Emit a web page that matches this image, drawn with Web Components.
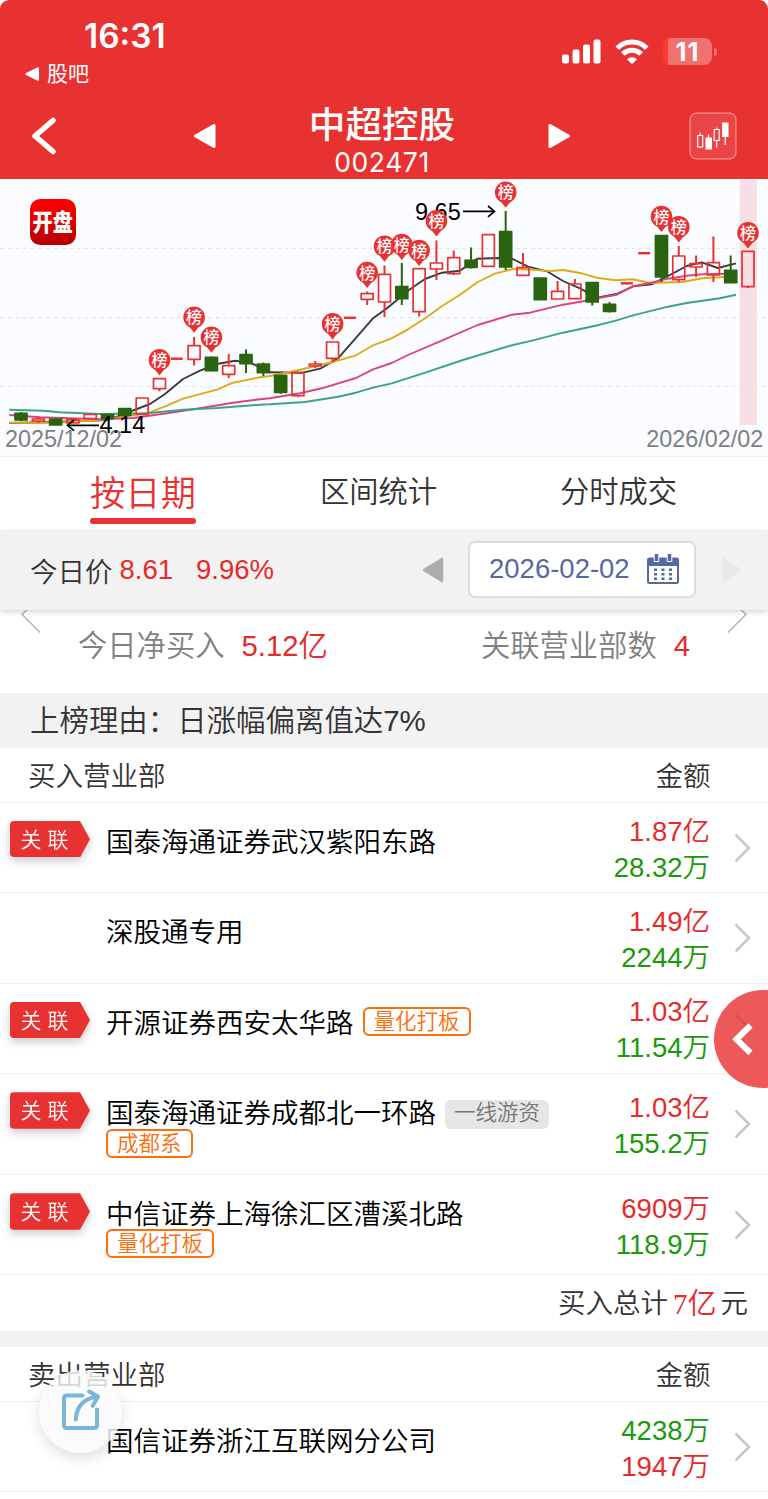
<!DOCTYPE html>
<html lang="zh-CN">
<head>
<meta charset="utf-8">
<meta name="viewport" content="width=device-width, initial-scale=1">
<title>中超控股 002471</title>
<style>
    body {
        margin: 0;
        background: #fff;
        font-family: "Liberation Sans", "Noto Sans CJK SC", sans-serif;
        font-weight: 350;
    }
</style>
</head>
<body>

<stock-page>
    <app-header slot="header" time="16:31" back="股吧" battery="11" code="002471">中超控股</app-header>
    <k-chart slot="header" from="2025/12/02" to="2026/02/02"></k-chart>
    <tab-bar slot="header">
        <tab-item active>按日期</tab-item>
        <tab-item>区间统计</tab-item>
        <tab-item>分时成交</tab-item>
    </tab-bar>
    <price-bar slot="header" price="8.61" change="9.96%" date="2026-02-02">今日价</price-bar>
    <net-summary slot="header">
        <summary-item value="5.12亿">今日净买入</summary-item>
        <summary-item value="4">关联营业部数</summary-item>
    </net-summary>

    <reason-bar>上榜理由：日涨幅偏离值达7%</reason-bar>
    <seat-section label="买入营业部" amount="金额">
        <seat-row linked buy="1.87亿" sell="28.32万">国泰海通证券武汉紫阳东路</seat-row>
        <seat-row buy="1.49亿" sell="2244万">深股通专用</seat-row>
        <seat-row linked buy="1.03亿" sell="11.54万">开源证券西安太华路<seat-tag slot="tags">量化打板</seat-tag></seat-row>
        <seat-row linked buy="1.03亿" sell="155.2万">国泰海通证券成都北一环路<seat-tag slot="tags" plain>一线游资</seat-tag><seat-tag slot="tags">成都系</seat-tag></seat-row>
        <seat-row linked buy="6909万" sell="118.9万">中信证券上海徐汇区漕溪北路<seat-tag slot="tags">量化打板</seat-tag></seat-row>
        <total-row slot="total" value="7亿" unit="元">买入总计</total-row>
    </seat-section>
    <seat-section label="卖出营业部" amount="金额">
        <seat-row flip buy="4238万" sell="1947万">国信证券浙江互联网分公司</seat-row>
    </seat-section>

    <drawer-button slot="float"></drawer-button>
    <share-button slot="float"></share-button>
</stock-page>

<script>
// clone a template string into an open shadow root
function render(el, html) {
    const template = document.createElement("template");
    template.innerHTML = html;
    el.attachShadow({mode: 'open'});
    el.shadowRoot.appendChild(template.content.cloneNode(true));
}

class StockPage extends HTMLElement {
    constructor() {
        super();
        render(this, `<style>
            :host {
                display: block;
                position: relative;
                height: 1499px;
                overflow: hidden;
                background: #fff;
            }
        </style>
        <slot name="header"></slot>
        <slot></slot>
        <slot name="float"></slot>`);
    }
}

class AppHeader extends HTMLElement {
    constructor() {
        super();
        render(this, `<style>
            :host {
                display: block;
                box-sizing: border-box;
                height: 179px;
                background: #e83231;
                border-radius: 9px 9px 0 0;
                color: #fff;
            }
            .status {
                display: flex;
                justify-content: space-between;
                height: 62px;
            }
            .time {
                font: 600 33.5px/40px Inter, sans-serif;
                padding: 16px 0 0 84px;
            }
            .icons {
                display: flex;
                align-items: center;
                padding: 38px 51px 0 0;
                height: 27px;
            }
            .battery {
                display: flex;
                align-items: center;
            }
            .cell {
                width: 49px;
                height: 27px;
                border-radius: 8px;
                background: linear-gradient(90deg, #ff3b30 5.5px, #f17171 5.5px);
                font: 700 25.5px/28px Inter, sans-serif;
                letter-spacing: 1px;
                text-align: center;
            }
            .nub {
                width: 3px;
                height: 8px;
                margin-left: 2px;
                border-radius: 0 4px 4px 0;
                background: #f17171;
            }
            .back {
                display: flex;
                align-items: center;
                gap: 8px;
                height: 24px;
                padding-left: 25px;
                font-size: 21px;
                font-weight: 400;
                line-height: 24px;
            }
            .nav {
                display: grid;
                grid-template-columns: 193px 23px 1fr 23px 118px 48px 31px;
                align-items: center;
                height: 93px;
            }
            .nav svg { display: block; margin-top: 6px; }
            .nav .chevron { margin-left: 31px; }
            .title {
                text-align: center;
                padding-top: 17px;
            }
            h1 {
                margin: 0;
                font-size: 36.6px;
                font-weight: 500;
                line-height: 42px;
            }
            .code {
                font: 400 26.5px/30px Inter, sans-serif;
                letter-spacing: .6px;
            }
        </style>
        <div class="status">
            <div class="time"></div>
            <div class="icons">
                <svg width="39" height="25" viewBox="0 0 39 25" fill="#fff">
                    <rect x="0" y="15.500" width="7" height="9" rx="2"/>
                    <rect x="10.500" y="10.500" width="7" height="14" rx="2"/>
                    <rect x="21" y="5.500" width="7" height="19" rx="2"/>
                    <rect x="31.500" y="0.500" width="7" height="24" rx="2"/>
                </svg>
                <svg style="margin:0 14px" width="34" height="26" viewBox="0 0 34 26">
                    <g fill="none" stroke="#fff" stroke-width="5">
                        <path d="M2.200 9.200A21 21 0 0 1 31.800 9.200"/>
                        <path d="M7.800 15A13 13 0 0 1 26.200 15"/>
                    </g>
                    <path d="M17 25.300l-5-5a7.300 7.300 0 0 1 10 0z" fill="#fff"/>
                </svg>
                <div class="battery"><div class="cell"></div><div class="nub"></div></div>
            </div>
        </div>
        <div class="back">
            <svg width="14" height="14" viewBox="0 0 14 14"><path d="M1.500 7L13 1.200V12.800z" fill="#fff" stroke="#fff" stroke-width="2" stroke-linejoin="round"/></svg>
            <span></span>
        </div>
        <div class="nav">
            <svg class="chevron" width="26" height="38" viewBox="0 0 26 38"><path d="M22 3.500L4 19L22 34.500" fill="none" stroke="#fff" stroke-width="5.500" stroke-linecap="round" stroke-linejoin="round"/></svg>
            <svg width="23" height="26" viewBox="0 0 23 26"><path d="M2.500 13L21 2.500V23.500z" fill="#fff" stroke="#fff" stroke-width="3" stroke-linejoin="round"/></svg>
            <div class="title"><h1><slot></slot></h1><div class="code"></div></div>
            <svg width="23" height="26" viewBox="0 0 23 26"><path d="M20.500 13L2 2.500V23.500z" fill="#fff" stroke="#fff" stroke-width="3" stroke-linejoin="round"/></svg>
            <span></span>
            <svg width="48" height="48" viewBox="0 0 48 48">
                <rect x="1" y="1" width="46" height="46" rx="6.500" fill="#fff" fill-opacity=".1" stroke="#fff" stroke-opacity=".5"/>
                <g fill="none" stroke="#fff" stroke-width="1.200">
                    <path d="M8.700 23.500h5v11.500h-5zM11.200 20.500v3M11.200 35v1M19.500 22.500v4M25.200 17.500h5v11h-5zM27.700 15.500v2M27.700 28.500v7M36.200 25v8"/>
                </g>
                <path d="M16.500 25.500h6.500v12h-6.500zM33 10.500h6.500v14.500h-6.500z" fill="#fff"/>
            </svg>
        </div>`);
        const root = this.shadowRoot;
        root.querySelector(".time").textContent = this.getAttribute("time");
        root.querySelector(".cell").textContent = this.getAttribute("battery");
        root.querySelector(".back span").textContent = this.getAttribute("back");
        root.querySelector(".code").textContent = this.getAttribute("code");
    }
}

// [colour, high, body top, body bottom, low], "-" is a flat day
const candles = [
    ["g", 232, 233.3, 240, 241], ["r", 237, 239, 241, 243], ["g", 239, 239, 245, 245],
    ["r", 239, 239.3, 243, 243], ["r", 234, 234.5, 238.5, 239], ["g", 234.5, 234.5, 238.5, 238.5],
    ["g", 228.7, 228.7, 235.3, 235.3], ["r", 218, 218, 234.3, 234.3], ["r", 198.7, 198.7, 208.7, 211.3],
    ["-", 178.7], ["r", 157, 165.7, 179.3, 185.5], ["g", 176.5, 177.3, 190.7, 191.3],
    ["r", 174, 185.7, 194.3, 198], ["g", 169.5, 174.7, 183.7, 193], ["g", 182.5, 184, 192.7, 196],
    ["g", 195.3, 195.3, 212.3, 213.8], ["r", 192.7, 192.7, 215.7, 217], ["r", 181, 184, 186, 188],
    ["r", 162, 162, 178.3, 182], ["-", 137.8], ["r", 111.5, 113.7, 119.3, 125],
    ["r", 85.5, 94.3, 122, 137], ["g", 83, 106.7, 118.7, 125], ["r", 88.7, 88.7, 131.7, 136.5],
    ["r", 60.5, 83, 89, 100], ["r", 70.5, 77.7, 93.7, 95], ["g", 67.5, 80.3, 87.3, 88.5],
    ["r", 54.7, 54.7, 86.3, 86.3], ["g", 31, 51.7, 87, 90], ["r", 73, 87.7, 95.3, 95.3],
    ["g", 98, 98, 119.7, 119.7], ["r", 101, 111.3, 119, 119], ["r", 99, 104, 118.7, 118.7],
    ["g", 102.7, 102.7, 122, 125.5], ["g", 122, 124.3, 131.3, 132.5], ["-", 103.3], ["-", 73.2],
    ["g", 55.7, 55.7, 97, 102], ["r", 66, 76, 99.7, 102], ["r", 75.5, 83.7, 87, 97],
    ["r", 56.5, 82.7, 95, 102], ["g", 75.5, 90.3, 102.7, 102.7], ["r", 71.3, 71.3, 106.7, 108]
];

// candle index -> centre of the pin
const pins = [[8, 179.3], [10, 136.7], [11, 156.7], [18, 143.3], [20, 92], [21, 65.7], [22, 64],
    [23, 70], [24, 40.3], [28, 11.7], [37, 36], [38, 46.3], [42, 52.3]];

const averages = {
    "#3a3b40": "9.3,243 55,242 107,240 125,234 133,230.5 150,224 165,214 183,199 200,190.7 217,184 235,180.7 242,181.7 251.7,183.3 270,192.3 303,192.7 321,188.3 338,178.3 373,138.3 387,128.3 410,109.3 425,99 442,92.7 460,90.7 477,78.7 498,78 512.7,79 528,86.7 547,91.3 563,101 580,108.3 597,117.7 616.7,114 633,106.3 651.7,104.3 668,96 686.7,86 701.7,82.3 718,88 736,83.3",
    "#dcab16": "9.3,242.7 57,242.7 100,240 133,235.3 150,232.3 167,225.7 183,218.7 217,209.7 233,202.7 260,197.3 270,196 300,189.7 331.7,182.3 356,175.3 373,165.3 391,158.7 408,149.3 426.7,137.3 441.7,126.3 460,114.7 477.7,102 495,93.7 512.7,89 533,89.7 550,91 563,90 581.7,93.3 596.7,97.7 615,100.3 633,99.3 650,103 683,102 701.7,98.3 720,97.3 736,96",
    "#d9457f": "9.3,235 40,237.3 100,239.3 133,238 167,233.3 200,228.3 233,222.7 260,219.3 270,218.3 300,213.3 321.7,208.3 356,198 373,189.3 391.7,183 408,175 441.7,160.7 477.7,145 511.7,134.7 530,132.7 563,124.7 583,121.3 600,117.7 616.7,114.7 633,106.3 650,103 668,98.7 686.7,95.7 703,94.3 730,93.7",
    "#3fa284": "9.3,229.7 43,230.7 60,232.3 100,234 147,233.3 183,229.7 217,228 260,224.7 270,224.3 305,222 338,216.7 356,212.7 373,207.7 391.7,203.3 423,193.3 463,180 511,165.5 533,160.3 563,152.7 600,144.7 616.7,140.3 633,135.3 668,126.7 686.7,123 720,118.3 736,114.7"
};

class KChart extends HTMLElement {
    constructor() {
        super();
        const x = i => 21 + 17.31 * i;
        let lines = "", bars = "", marks = "";
        for (const color in averages) {
            lines += `<polyline points="${averages[color]}" stroke="${color}"/>`;
        }
        candles.forEach(([kind, high, top, bottom, low], i) => {
            if (kind == "-") {
                bars += `<path d="M${x(i) - 6} ${high}h12" stroke="#e83231" stroke-width="2.500"/>`;
                return;
            }
            const color = kind == "g" ? "#2b6410" : "#e83231";
            bars += `<g stroke="${color}" fill="${kind == "g" ? color : "none"}" stroke-width="2" stroke-linejoin="round">
                <path d="M${x(i)} ${high}V${top}M${x(i)} ${bottom}V${low}"/>
                <rect x="${x(i) - 6}" y="${top}" width="12" height="${bottom - top}" stroke-width="1.700"/></g>`;
        });
        for (const [i, y] of pins) {
            marks += `<g transform="translate(${x(i)} ${y + .6})">
                <path d="M-5.500 8.500L0 15.500L5.500 8.500z" fill="#e83231"/><circle r="10.800" fill="#e83231"/>
                <text y="5.900" font-size="16" font-weight="500" text-anchor="middle" fill="#fff">榜</text></g>`;
        }
        render(this, `<style>
            :host {
                display: block;
                height: 278px;
                padding-top: 1px;
                box-sizing: border-box;
                background: #fbfcff;
                border-bottom: 1px solid #ecedf1;
            }
            svg { display: block; font-family: "Liberation Sans", "Noto Sans CJK SC", sans-serif; }
        </style>
        <svg width="768" height="275" viewBox="0 0 768 275">
            <defs>
                <linearGradient id="logo" x2="0" y2="1"><stop stop-color="#fd0000"/><stop offset=".4" stop-color="#e80002"/><stop offset="1" stop-color="#b40003"/></linearGradient>
            </defs>
            <path d="M0 68.500H768M0 137.700H768M0 206.500H768" stroke="#e2e4e9" stroke-width="1.200" stroke-dasharray="3.800 3.900"/>
            <rect x="739.700" y="0" width="17.200" height="245" fill="#f7dfe4"/>
            <rect x="30" y="19" width="46" height="46" rx="10" fill="url(#logo)"/>
            <text transform="translate(52.700 51) scale(.84 1)" font-size="24" font-weight="900" text-anchor="middle" fill="#fff">开盘</text>
            <g fill="none" stroke-width="1.900" stroke-linejoin="round">${lines}</g>
            ${bars}
            <g font-size="23.400" fill="#808080">
                <text class="from" x="5" y="267.300"></text>
                <text class="to" x="646.300" y="267.300"></text>
            </g>
            <g font-size="23.500" fill="#000">
                <text x="99.500" y="253">4.14</text>
                <text x="415" y="39.500">9.65</text>
            </g>
            <g fill="none" stroke="#000" stroke-width="1.700">
                <path d="M99 245.300H68M463 31.400H494"/>
                <path d="M74 240L67.500 245.300L74 250.600M488 26L494.500 31.400L488 36.800"/>
            </g>
            ${marks}
        </svg>`);
        this.shadowRoot.querySelector(".from").textContent = this.getAttribute("from");
        this.shadowRoot.querySelector(".to").textContent = this.getAttribute("to");
    }
}

class TabBar extends HTMLElement {
    constructor() {
        super();
        render(this, `<style>
            :host {
                display: grid;
                grid-template-columns: 286px 185px 1fr;
                height: 73px;
                padding-right: 2px;
            }
        </style><slot></slot>`);
    }
}

class TabItem extends HTMLElement {
    constructor() {
        super();
        render(this, `<style>
            :host {
                display: flex;
                justify-content: center;
                color: #333;
                font-size: 29.3px;
                line-height: 70px;
            }
            :host([active]) {
                color: #e83231;
                font-size: 35.3px;
                line-height: 74px;
            }
            span { height: 61px; }
            :host([active]) span::after {
                content: "";
                display: block;
                height: 6px;
                margin-top: -13px;
                border-radius: 3px;
                background: #e83231;
            }
        </style><span><slot></slot></span>`);
    }
}

class PriceBar extends HTMLElement {
    constructor() {
        super();
        render(this, `<style>
            :host {
                display: flex;
                align-items: center;
                position: relative;
                z-index: 1;
                height: 79.500px;
                padding: 0 25px 0 30px;
                box-sizing: border-box;
                background: #f2f2f2;
                box-shadow: 0 2px 5px rgba(0, 0, 0, .16);
                font-size: 27.5px;
                color: #333;
            }
            .num { color: #e62a2c; margin-left: 7px; }
            .num + .num { margin-left: 23px; }
            .prev { margin-left: auto; }
            .date {
                display: flex;
                align-items: center;
                justify-content: space-between;
                box-sizing: border-box;
                width: 228px;
                height: 57px;
                margin: 0 25px 0 24px;
                padding: 0 15px 2px 19px;
                border: 2px solid #dcdcdc;
                border-radius: 7px;
                background: #fff;
                color: #5669a2;
            }
        </style>
        <slot></slot><span class="num price"></span><span class="num change"></span>
        <svg class="prev" width="22" height="28" viewBox="0 0 22 28"><path d="M2 14L20 3V25z" fill="#acacac" stroke="#acacac" stroke-width="2.500" stroke-linejoin="round"/></svg>
        <div class="date">
            <span></span>
            <svg width="32" height="30" viewBox="0 0 32 30">
                <rect x="1" y="4.500" width="30" height="24.500" rx="1.500" fill="#fff" stroke="#5669a2" stroke-width="2"/>
                <path d="M1 4.500h30v7.500H1z" fill="#5669a2"/>
                <path d="M7.200 -1h4.600v8.500H7.200zM20.200 -1h4.600v8.500h-4.600z" fill="#5669a2" stroke="#fff" stroke-width="1"/>
                <g stroke="#5669a2" stroke-width="3" stroke-dasharray="2.500 2">
                    <path d="M8.500 14.500v12M16 14.500v12M23.500 14.500v12"/>
                </g>
            </svg>
        </div>
        <svg width="22" height="28" viewBox="0 0 22 28"><path d="M20 14L2 3V25z" fill="#e9e9e9" stroke="#e9e9e9" stroke-width="2.500" stroke-linejoin="round"/></svg>`);
        this.shadowRoot.querySelector(".price").textContent = this.getAttribute("price");
        this.shadowRoot.querySelector(".change").textContent = this.getAttribute("change");
        this.shadowRoot.querySelector(".date span").textContent = this.getAttribute("date");
    }
}

class NetSummary extends HTMLElement {
    constructor() {
        super();
        render(this, `<style>
            :host {
                display: flex;
                justify-content: space-between;
                height: 83.500px;
                padding: 0 21px;
            }
            svg { flex: none; margin-top: -8px; }
            .items {
                flex: 1;
                display: flex;
                justify-content: space-between;
                padding: 0 37px 0 37px;
            }
        </style>
        <svg width="20" height="32" viewBox="0 0 20 32"><path d="M14 0L1 12.500L19 30.500" fill="none" stroke="#adadad" stroke-width="1.200"/></svg>
        <div class="items"><slot></slot></div>
        <svg width="20" height="32" viewBox="0 0 20 32"><path d="M6 0L19 12.500L1 30.500" fill="none" stroke="#adadad" stroke-width="1.200"/></svg>`);
    }
}

class SummaryItem extends HTMLElement {
    constructor() {
        super();
        render(this, `<style>
            :host {
                display: flex;
                gap: 17px;
                color: #808080;
                font-size: 29.3px;
                line-height: 72px;
            }
            b { color: #e62a2c; font-weight: inherit; }
        </style><span><slot></slot></span><b></b>`);
        this.shadowRoot.querySelector("b").textContent = this.getAttribute("value");
    }
}

class ReasonBar extends HTMLElement {
    constructor() {
        super();
        render(this, `<style>
            :host {
                display: block;
                height: 54.700px;
                padding-left: 30px;
                background: #f2f2f2;
                color: #333;
                font-size: 29.45px;
                line-height: 56px;
            }
        </style><slot></slot>`);
    }
}

class SeatSection extends HTMLElement {
    constructor() {
        super();
        render(this, `<style>
            :host { display: block; color: #333; }
            :host(:not(:first-of-type)) { border-top: 16px solid #f2f2f2; }
            .head {
                display: flex;
                justify-content: space-between;
                box-sizing: border-box;
                height: 55.300px;
                padding: 0 57.500px 0 28px;
                border-bottom: 1.500px solid #ededed;
                font-size: 27.5px;
                line-height: 57px;
            }
        </style>
        <div class="head"><span class="label"></span><span class="amount"></span></div>
        <slot></slot>
        <slot name="total"></slot>`);
        this.shadowRoot.querySelector(".label").textContent = this.getAttribute("label");
        this.shadowRoot.querySelector(".amount").textContent = this.getAttribute("amount");
    }
}

class SeatRow extends HTMLElement {
    constructor() {
        super();
        render(this, `<style>
            :host {
                display: grid;
                grid-template-columns: 96px 450px 1fr 41px;
                box-sizing: border-box;
                min-height: 90.400px;
                padding-left: 10px;
                border-bottom: 1px solid #ededed;
                font-size: 27.5px;
            }
            .badge {
                height: 36.500px;
                margin-top: 18px;
                filter: drop-shadow(0 4px 4px rgba(0, 0, 0, .2));
            }
            .badge span {
                display: block;
                box-sizing: border-box;
                width: 80px;
                height: 36.500px;
                padding-left: 10.500px;
                border-radius: 4px;
                clip-path: polygon(0 0, 70px 0, 100% 50%, 70px 100%, 0 100%);
                background: #e83231;
                color: #fff;
                font-size: 21px;
                letter-spacing: 6px;
                line-height: 37px;
                white-space: nowrap;
            }
            :host(:not([linked])) .badge { visibility: hidden; }
            .name {
                display: flex;
                flex-wrap: wrap;
                align-content: flex-start;
                column-gap: 9px;
                padding: 24px 0 16px;
                color: #000;
                line-height: 31px;
            }
            .amounts {
                align-self: center;
                text-align: right;
                line-height: 36px;
                padding-top: 4px;
                margin-right: 17px;
            }
            .amounts div { color: #e62a2c; }
            .amounts div + div { color: #1a9a0a; }
            :host([flip]) .amounts div { color: #1a9a0a; }
            :host([flip]) .amounts div + div { color: #e62a2c; }
            svg { align-self: center; margin-left: 7px; }
        </style>
        <div class="badge"><span></span></div>
        <div class="name"><span><slot></slot></span><slot name="tags"></slot></div>
        <div class="amounts"><div class="buy"></div><div class="sell"></div></div>
        <svg width="18" height="30" viewBox="0 0 18 30"><path d="M1.500 1.500L15 15L1.500 28.500" fill="none" stroke="#c7c7c7" stroke-width="2.500"/></svg>`);
        if (this.hasAttribute("linked")) {
            this.shadowRoot.querySelector(".badge span").textContent = "关联";
        }
        this.shadowRoot.querySelector(".buy").textContent = this.getAttribute("buy");
        this.shadowRoot.querySelector(".sell").textContent = this.getAttribute("sell");
    }
}

class SeatTag extends HTMLElement {
    constructor() {
        super();
        render(this, `<style>
            :host {
                display: block;
                box-sizing: border-box;
                height: 29px;
                margin-top: -1px;
                padding: 0 9px;
                border: 2px solid #fb6d0d;
                border-radius: 6px;
                color: #fb6d0d;
                font-size: 21.5px;
                line-height: 26px;
            }
            :host([plain]) {
                margin: 2px 0 1px;
                border: 0;
                background: #e6e6e6;
                color: #777;
            }
        </style><slot></slot>`);
    }
}

class TotalRow extends HTMLElement {
    constructor() {
        super();
        render(this, `<style>
            :host {
                display: flex;
                justify-content: flex-end;
                height: 55.600px;
                padding-right: 20px;
                color: #333;
                font-size: 27.5px;
                line-height: 58px;
            }
            b {
                margin: 0 4px 0 5px;
                color: #e62a2c;
                font: 350 29px/58px "Liberation Serif", "Noto Sans CJK SC", serif;
            }
        </style><span><slot></slot></span><b></b><span class="unit"></span>`);
        this.shadowRoot.querySelector("b").textContent = this.getAttribute("value");
        this.shadowRoot.querySelector(".unit").textContent = this.getAttribute("unit");
    }
}

class DrawerButton extends HTMLElement {
    constructor() {
        super();
        render(this, `<style>
            :host {
                position: absolute;
                top: 990px;
                right: -44px;
                z-index: 2;
                width: 98px;
                height: 98px;
                border-radius: 50%;
                background: rgba(232, 47, 49, .8);
            }
        </style>
        <svg width="98" height="98" viewBox="0 0 98 98"><path d="M36.500 35.500L22.500 49.300L36.500 63" fill="none" stroke="#fff" stroke-width="6"/></svg>`);
    }
}

class ShareButton extends HTMLElement {
    constructor() {
        super();
        render(this, `<style>
            :host {
                position: absolute;
                left: 38.500px;
                top: 1370px;
                z-index: 2;
                width: 83px;
                height: 83px;
                border-radius: 50%;
                background: rgba(250, 250, 250, .82);
                box-shadow: 0 5px 14px rgba(0, 0, 0, .13);
            }
        </style>
        <svg width="83" height="83" viewBox="0 0 83 83" fill="none" stroke="#79b7d8" stroke-width="4" stroke-linecap="round" stroke-linejoin="round">
            <path d="M43.500 25.500H27.500a2.500 2.500 0 0 0-2.500 2.500V55.500a2.500 2.500 0 0 0 2.500 2.500H55.500a2.500 2.500 0 0 0 2.500-2.500V39.500"/>
            <path d="M36.800 49.500C37.500 37 44 28.500 58.500 26.500M50 21.500L59 26.500L53.700 36"/>
        </svg>`);
    }
}

window.customElements.define("stock-page", StockPage);
window.customElements.define("app-header", AppHeader);
window.customElements.define("k-chart", KChart);
window.customElements.define("tab-bar", TabBar);
window.customElements.define("tab-item", TabItem);
window.customElements.define("price-bar", PriceBar);
window.customElements.define("net-summary", NetSummary);
window.customElements.define("summary-item", SummaryItem);
window.customElements.define("reason-bar", ReasonBar);
window.customElements.define("seat-section", SeatSection);
window.customElements.define("seat-row", SeatRow);
window.customElements.define("seat-tag", SeatTag);
window.customElements.define("total-row", TotalRow);
window.customElements.define("drawer-button", DrawerButton);
window.customElements.define("share-button", ShareButton);
</script>
</body>
</html>
